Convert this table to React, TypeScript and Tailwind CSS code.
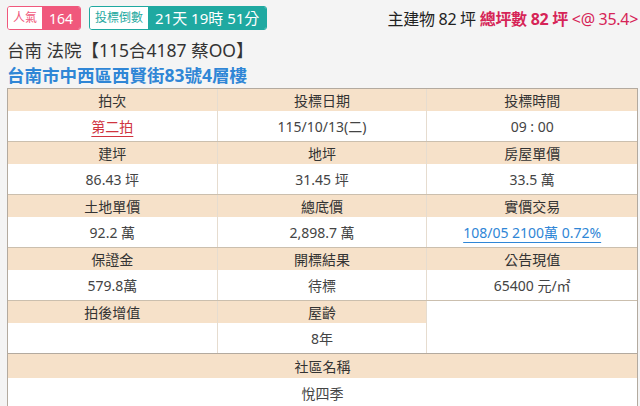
import * as React from "react";

type Cell = { label: string; value?: React.ReactNode };

const font = { fontFamily: '"Noto Sans", "Noto Sans CJK TC", sans-serif' };

const rows: Cell[][] = [
  [
    { label: "拍次", value: <span className="text-[#d0343f] underline decoration-1 underline-offset-4">第二拍</span> },
    { label: "投標日期", value: "115/10/13(二)" },
    { label: "投標時間", value: "09 : 00" },
  ],
  [
    { label: "建坪", value: "86.43 坪" },
    { label: "地坪", value: "31.45 坪" },
    { label: "房屋單價", value: "33.5 萬" },
  ],
  [
    { label: "土地單價", value: "92.2 萬" },
    { label: "總底價", value: "2,898.7 萬" },
    {
      label: "實價交易",
      value: <span className="text-[#2f86d6] underline decoration-1 underline-offset-4">108/05 2100萬 0.72%</span>,
    },
  ],
  [
    { label: "保證金", value: "579.8萬" },
    { label: "開標結果", value: "待標" },
    { label: "公告現值", value: <>65400 元/㎡</> },
  ],
];

function InfoCell({ cell, last }: { cell: Cell; last?: boolean }) {
  return (
    <div className={`flex flex-col ${last ? "" : "border-r border-[#e6dccf]"}`}>
      <div className="flex h-[22px] items-center justify-center bg-[#f6e1c9] text-[14px] text-[#333]">{cell.label}</div>
      <div className="flex h-[30px] items-center justify-center bg-white text-[14px] text-[#444]">{cell.value}</div>
    </div>
  );
}

export default function App() {
  return (
    <div className="h-[406px] w-[640px] overflow-hidden bg-[#f4f4f4]" style={font}>
      <div className="flex items-start justify-between pl-[7px] pr-[2px] pt-[6px]">
        <div className="flex items-center gap-[8px]">
          <div className="flex h-[24px] overflow-hidden rounded-[3px] border border-[#f0587c]">
            <span className="flex items-center bg-white px-[5px] text-[12px] text-[#f0587c]">人氣</span>
            <span className="flex items-center bg-[#f0587c] px-[7px] text-[14px] text-white">164</span>
          </div>
          <div className="flex h-[24px] overflow-hidden rounded-[3px] border border-[#1fa9a1]">
            <span className="flex items-center bg-white px-[5px] text-[12px] text-[#1fa9a1]">投標倒數</span>
            <span className="flex items-center bg-[#1fa9a1] px-[7px] text-[15px] text-white">21天 19時 51分</span>
          </div>
        </div>
        <div className="mt-[1px] whitespace-nowrap text-[16px] tracking-[-0.3px] text-[#222]">
          主建物 82 坪 <span className="font-bold text-[#d62457]">總坪數 82 坪</span>{" "}
          <span className="text-[#d62457]">&lt;@ 35.4&gt;</span>
        </div>
      </div>
      <div className="mt-[7px] pl-[7px] text-[17.5px] leading-[25px] text-[#333]">台南 法院【115合4187 蔡OO】</div>
      <div className="pl-[7px] text-[17.5px] font-bold leading-[25px] text-[#2f86d6]">台南市中西區西賢街83號4層樓</div>
      <div className="ml-[7px] mr-[2px] border border-[#b3aa9f] bg-white">
        {rows.map((row, i) => (
          <div key={i} className={`grid grid-cols-3 ${i > 0 ? "border-t border-[#cbbfae]" : ""}`}>
            {row.map((cell, j) => (
              <InfoCell key={j} cell={cell} last={j === 2} />
            ))}
          </div>
        ))}
        <div className="grid grid-cols-3 border-t border-[#cbbfae]">
          <InfoCell cell={{ label: "拍後增值", value: "" }} />
          <InfoCell cell={{ label: "屋齡", value: "8年" }} />
          <div className="bg-white" />
        </div>
        <div className="border-t border-[#b3aa9f]">
          <div className="flex h-[24px] items-center justify-center bg-[#f6e1c9] text-[14px] text-[#333]">社區名稱</div>
          <div className="flex h-[30px] items-center justify-center bg-white text-[14px] text-[#444]">悅四季</div>
        </div>
      </div>
    </div>
  );
}
